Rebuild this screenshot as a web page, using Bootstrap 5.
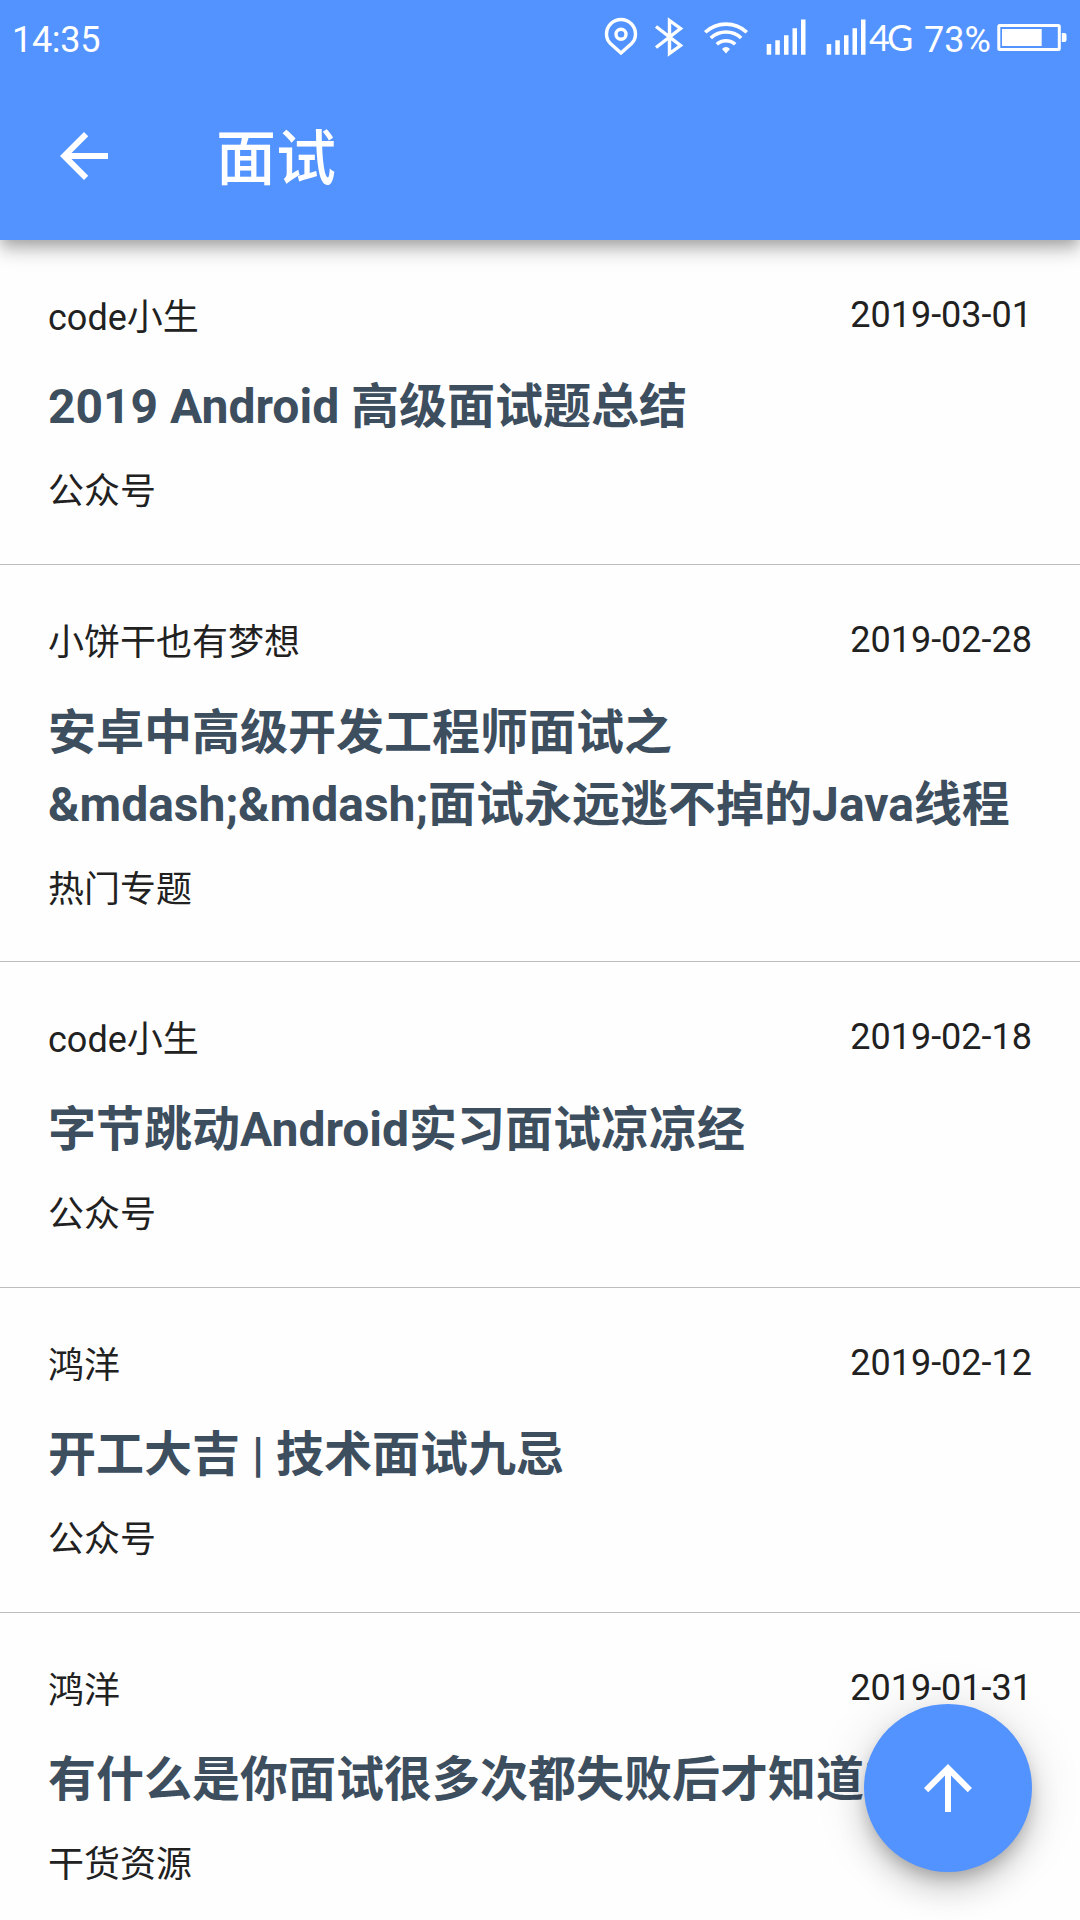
<!DOCTYPE html>
<html lang="zh-CN">
<head>
<meta charset="utf-8">
<meta name="viewport" content="width=device-width, initial-scale=1">
<title>面试</title>
<link href="https://cdn.jsdelivr.net/npm/bootstrap@5.3.0/dist/css/bootstrap.min.css" rel="stylesheet">
<style>
  :root { --brand: #5393ff; }
  body { font-family: Roboto, "Noto Sans CJK SC", sans-serif; font-size: 36px; color: #212121; background: #fefefe; }
  .screen { width: 1080px; height: 1920px; }
  .app-header { height: 240px; background: var(--brand); z-index: 2;
    box-shadow: 0 6px 12px -3px rgba(0,0,0,.2), 0 12px 15px 0 rgba(0,0,0,.14), 0 3px 30px 0 rgba(0,0,0,.12); }
  .status-bar { height: 72px; line-height: 81px; padding-left: 12px; }
  .clock { letter-spacing: -.3px; }
  .status-net { font-family: Lato, sans-serif; width: 56px; padding-left: 1px; line-height: 75px; letter-spacing: -3px; }
  .status-pct { width: 68px; }
  .tool-bar { height: 168px; padding: 0 48px; }
  .tool-title { font-size: 60px; line-height: 72px; font-weight: 500; margin-left: 96px; padding-top: 7px; }
  .article { height: 325.3px; padding: 49px 48px 0; border-bottom: 1px solid #bdbdbd; }
  .article.tall { height: 397px; }
  .author { line-height: 59px; }
  .date { line-height: 53px; }
  .headline { font-size: 48px; line-height: 72px; color: #3d4e5f; margin: 23.3px 0 22px; }
  .topic { line-height: 54px; }
  .fab { width: 168px; height: 168px; right: 48px; bottom: 48px; background: var(--brand); z-index: 3;
    box-shadow: 0 9px 15px -3px rgba(0,0,0,.2), 0 18px 30px 0 rgba(0,0,0,.14), 0 3px 54px 0 rgba(0,0,0,.12); }
</style>
</head>
<body>
<div class="screen position-relative overflow-hidden d-flex flex-column">
  <header class="app-header position-relative flex-shrink-0 text-white">
    <div class="status-bar d-flex">
      <span class="clock">14:35</span>
      <div class="d-flex ms-auto">
        <svg width="50" height="72" viewBox="600 0 50 72" fill="none" stroke="#fff" stroke-width="3.4"><path d="M621 53L610.4 43.5C607.600 40.800 606.500 37.500 606.500 34A14.500 14.500 0 0 1 635.500 34C635.500 37.500 634.400 40.800 631.600 43.500Z"/><circle cx="621" cy="34.300" r="5"/></svg>
        <svg width="45" height="72" viewBox="650 0 45 72" fill="none" stroke="#fff" stroke-width="3.4"><path d="M656 26.500L680.500 45.500L669.500 53.500V20.500L680.500 28.500L656 47.500"/></svg>
        <svg width="65" height="72" viewBox="695 0 65 72" fill="none" stroke="#fff" stroke-width="3.600"><path d="M705.200 32.300A30.500 30.500 0 0 1 746.800 32.300M710.800 38A22.300 22.300 0 0 1 741.200 38M716.800 44.300A13.500 13.500 0 0 1 735.200 44.300"/><path d="M722 49Q726 45 730 49L726 53.500Z" fill="#fff" stroke="none"/></svg>
        <svg width="60" height="72" viewBox="760 0 60 72" fill="#fff"><path id="bars" d="M766.700 44h4.500v10.700h-4.500zM775.300 40.300h4.500v14.400h-4.500zM784 35.300h4.500v19.400H784zM792.500 28.300h4.500v26.400h-4.500zM801 19.500h4.500v35.200H801z"/></svg>
        <svg width="48" height="72" viewBox="760 0 48 72" fill="#fff"><use href="#bars"/></svg>
        <span class="status-net">4G</span>
        <span class="status-pct">73%</span>
        <svg width="88" height="72" viewBox="992 0 88 72"><rect x="998.800" y="25.500" width="60.500" height="24" rx="1" fill="none" stroke="#fff" stroke-width="3"/><path d="M1002 29h39.700v17H1002zM1061.800 33h2.700q2 0 2 2v5q0 2-2 2h-2.700z" fill="#fff"/></svg>
      </div>
    </div>
    <div class="tool-bar d-flex align-items-center">
      <svg width="72" height="72" viewBox="0 0 24 24" fill="#fff"><path d="M20 11H7.830l5.590-5.590L12 4l-8 8 8 8 1.410-1.410L7.830 13H20v-2z"/></svg>
      <h1 class="tool-title mb-0">面试</h1>
    </div>
  </header>

  <main>
    <article class="article">
      <div class="d-flex justify-content-between align-items-start"><span class="author">code小生</span><span class="date">2019-03-01</span></div>
      <h2 class="headline fw-bold">2019 Android 高级面试题总结</h2>
      <div class="topic">公众号</div>
    </article>
    <article class="article tall">
      <div class="d-flex justify-content-between align-items-start"><span class="author">小饼干也有梦想</span><span class="date">2019-02-28</span></div>
      <h2 class="headline fw-bold">安卓中高级开发工程师面试之<br>&amp;mdash;&amp;mdash;面试永远逃不掉的Java线程</h2>
      <div class="topic">热门专题</div>
    </article>
    <article class="article">
      <div class="d-flex justify-content-between align-items-start"><span class="author">code小生</span><span class="date">2019-02-18</span></div>
      <h2 class="headline fw-bold">字节跳动Android实习面试凉凉经</h2>
      <div class="topic">公众号</div>
    </article>
    <article class="article">
      <div class="d-flex justify-content-between align-items-start"><span class="author">鸿洋</span><span class="date">2019-02-12</span></div>
      <h2 class="headline fw-bold">开工大吉 | 技术面试九忌</h2>
      <div class="topic">公众号</div>
    </article>
    <article class="article border-0">
      <div class="d-flex justify-content-between align-items-start"><span class="author">鸿洋</span><span class="date">2019-01-31</span></div>
      <h2 class="headline fw-bold">有什么是你面试很多次都失败后才知道的</h2>
      <div class="topic">干货资源</div>
    </article>
  </main>

  <button type="button" class="fab btn border-0 rounded-circle position-absolute d-flex align-items-center justify-content-center p-0" aria-label="回到顶部">
    <svg width="72" height="72" viewBox="0 0 24 24" fill="#fff"><path d="M4 12l1.410 1.410L11 7.830V20h2V7.830l5.580 5.590L20 12l-8-8-8 8z"/></svg>
  </button>
</div>
<script src="https://cdn.jsdelivr.net/npm/bootstrap@5.3.0/dist/js/bootstrap.bundle.min.js"></script>
</body>
</html>
